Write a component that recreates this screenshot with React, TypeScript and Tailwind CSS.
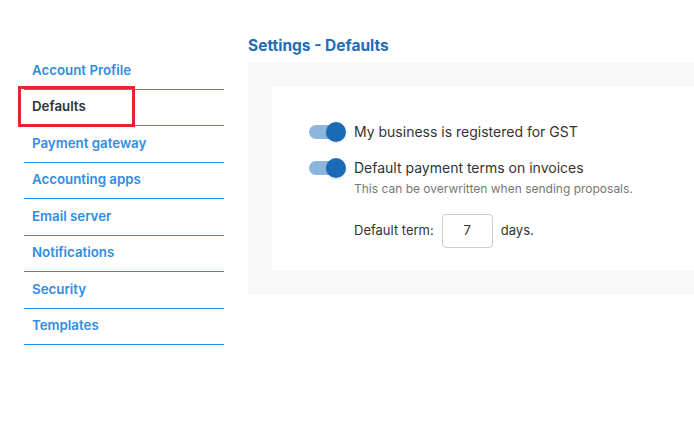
const navItems = [
  'Account Profile',
  'Defaults',
  'Payment gateway',
  'Accounting apps',
  'Email server',
  'Notifications',
  'Security',
  'Templates',
];

function Toggle() {
  return (
    <div className="relative w-[38px] h-[20px] flex items-center shrink-0">
      <div className="w-[34px] h-[14px] rounded-full bg-[#8cb6de] ml-[1px]" />
      <div className="absolute right-0 top-0 w-[20px] h-[20px] rounded-full bg-[#1a6ab5] shadow-sm" />
    </div>
  );
}

export default function App() {
  return (
    <div
      className="w-[694px] h-[422px] bg-white overflow-hidden flex pt-[36px] pl-[24px]"
      style={{ fontFamily: 'Inter, "Noto Sans", sans-serif' }}
    >
      <nav className="w-[200px] shrink-0 pt-[17px]">
        {navItems.map((item) => (
          <div
            key={item}
            className={`relative h-[36.5px] flex items-center pl-2 border-b border-[#2b8fe6] text-[13.3px] font-semibold ${
              item === 'Defaults' ? 'text-[#333]' : 'text-[#2f8de4]'
            }`}
          >
            {item}
            {item === 'Defaults' && (
              <span className="absolute left-[-6px] top-[-4px] w-[117px] h-[41px] border-[3px] border-[#e3262e]" />
            )}
          </div>
        ))}
      </nav>
      <main className="flex-1 ml-[24px]">
        <h1 className="text-[15.5px] font-bold text-[#1f6db5] h-[19px] leading-[19px]">
          Settings - Defaults
        </h1>
        <div className="mt-[8px] bg-[#f8f8f8] p-[24px] pr-0">
          <div className="bg-white h-[184px] pl-[36px] pt-[35px] text-[#333] text-[14px]">
            <div className="flex items-center gap-[8px] h-[20px]">
              <Toggle />
              <span className="leading-[20px]">My business is registered for GST</span>
            </div>
            <div className="flex items-start gap-[8px] mt-[16px]">
              <Toggle />
              <div>
                <div className="h-[20px] leading-[20px]">Default payment terms on invoices</div>
                <div className="text-[12px] text-[#777] leading-[14px] mt-[4px]">
                  This can be overwritten when sending proposals.
                </div>
                <div className="flex items-center gap-[8px] mt-[18px] text-[13px]">
                  <span>Default term:</span>
                  <div className="w-[51px] h-[34px] border border-[#ccc] rounded-[4px] flex items-center justify-center">
                    7
                  </div>
                  <span>days.</span>
                </div>
              </div>
            </div>
          </div>
        </div>
      </main>
    </div>
  );
}
